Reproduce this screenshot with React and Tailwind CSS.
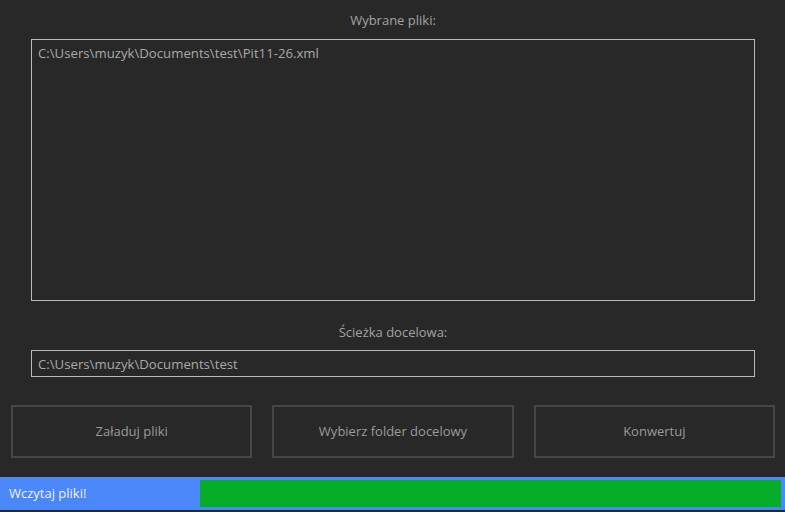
const font = { fontFamily: '"Open Sans", "Noto Sans", sans-serif' };

const ActionButton = ({ label }) => (
  <button className="flex-1 h-[53px] border-2 border-[#464646] bg-[#282828] text-[#9a9a9a] text-[13px]">
    {label}
  </button>
);

const App = () => {
  return (
    <div
      className="w-[785px] h-[512px] bg-[#282828] flex flex-col overflow-hidden"
      style={font}
    >
      <div className="flex flex-col pl-[31px] pr-[30px] pt-[10px]">
        <p className="text-center text-[13px] text-[#a3a3a3] leading-[20px]">Wybrane pliki:</p>
        <div className="mt-[9px] h-[262px] border border-[#b9b9b9] px-[6px] pt-[3px]">
          <p className="text-[13.2px] text-[#a9a9a9] leading-[20px]">
            C:\Users\muzyk\Documents\test\Pit11-26.xml
          </p>
        </div>
        <p className="mt-[21px] text-center text-[13px] text-[#a3a3a3] leading-[20px]">
          Ścieżka docelowa:
        </p>
        <div className="mt-[8px] h-[27px] border border-[#b9b9b9] px-[6px] flex items-center">
          <p className="text-[13.2px] text-[#a9a9a9] leading-[20px]">
            C:\Users\muzyk\Documents\test
          </p>
        </div>
      </div>
      <div className="flex gap-[20px] pl-[11px] pr-[10px] mt-[28px]">
        <ActionButton label="Załaduj pliki" />
        <ActionButton label="Wybierz folder docelowy" />
        <ActionButton label="Konwertuj" />
      </div>
      <div className="mt-[19px] h-[33px] bg-[#4a87f8] flex items-center pl-[9px] pr-[4px]">
        <span className="w-[191px] text-[13px] text-[#f2f2ff]">Wczytaj pliki!</span>
        <div className="flex-1 h-[27px] bg-[#06ad29]" />
      </div>
    </div>
  );
};

export default App;
